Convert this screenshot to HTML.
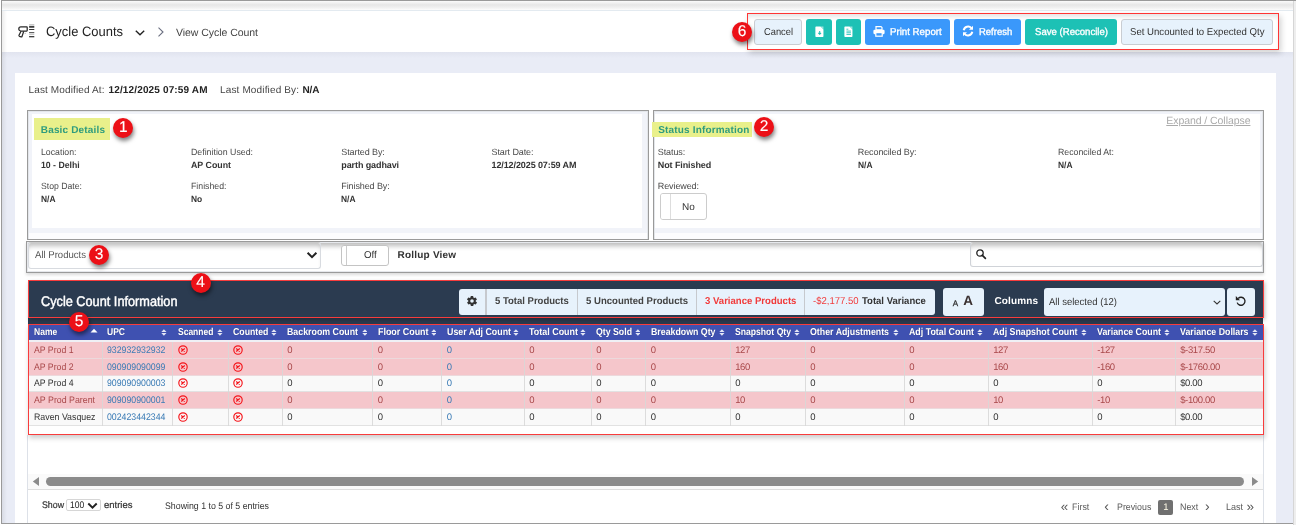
<!DOCTYPE html>
<html lang="en"><head><meta charset="utf-8"><title>View Cycle Count</title>
<style>
html,body{margin:0;padding:0}
body{width:1296px;height:525px;overflow:hidden;position:relative;background:#fff;font-family:"Liberation Sans",sans-serif;font-size:10px;color:#333}
.a{position:absolute;box-sizing:border-box}
.t{position:absolute;white-space:nowrap}
.c{position:absolute;width:20px;height:20px;border-radius:50%;background:#ec1017;color:#fff;-webkit-text-stroke:0.120px #fff;font-size:15.500px;line-height:20px;text-align:center;box-shadow:1px 3px 4px rgba(0,0,0,.5)}
.btn{position:absolute;box-sizing:border-box;top:19px;height:26px;border-radius:3px}
.lt{background:#e7f2fc;border:1px solid #c9cdd2}
.teal{background:#1dc1b5}
.blue{background:#3a98fb}
.box{position:absolute;box-sizing:border-box;border:1px solid #9a9a9a;background:#f1f3f9;box-shadow:inset 0 0 0 1px #e3e6ea}
.box i{position:absolute;background:#fff;display:block}
.row{position:absolute;left:29px;width:1234px;height:17px}
.cell{position:absolute;top:0;height:100%;box-sizing:border-box;border-left:1px solid #dcdcdc}
</style></head><body>
<div class="a" style="left:0;top:0;width:1296px;height:525px;overflow:hidden;will-change:transform;text-rendering:geometricPrecision">
<div class="a" style="left:2px;top:1px;width:1291px;height:9px;background:linear-gradient(#fbfbfb,#e7e7e7 42%,#efefef 70%,#fcfcfc)"></div>
<div class="a" style="left:2px;top:10px;width:1291px;height:1px;background:#e3eaf0"></div>
<div class="a" style="left:2px;top:52px;width:1291px;height:471px;background:#e9ecf6"></div>
<div class="a" style="left:2px;top:11px;width:5px;height:512px;background:linear-gradient(90deg,rgba(0,0,0,.07),rgba(0,0,0,0))"></div>
<div class="a" style="left:1px;top:0;width:1295px;height:1px;background:#9a9a9a"></div>
<div class="a" style="left:1px;top:0;width:1px;height:524px;background:#9a9a9a"></div>
<div class="a" style="left:1px;top:523px;width:1293px;height:1px;background:#9a9a9a"></div>
<div class="a" style="left:1293px;top:1px;width:3px;height:524px;background:#eee;border-left:1px solid #d6d6d6"></div>
<div class="a" style="left:2px;top:52px;width:1291px;height:6px;background:linear-gradient(rgba(40,40,80,.045),rgba(40,40,80,0))"></div>
<div class="a" style="left:15px;top:73px;width:1261px;height:450px;background:#fff"></div>
<div class="a" style="left:27px;top:435px;width:1px;height:88px;background:#dde1e8"></div>
<div class="a" style="left:1263px;top:435px;width:1px;height:88px;background:#dde1e8"></div>
<svg class="a" style="left:17px;top:23px" width="20" height="16" viewBox="0 0 20 16">
<path d="M3.900 3.800H9.700Q10.200 3.800 10.200 4.300V7.500Q10.200 8 9.700 8H3.900A2.100 2.100 0 0 1 3.900 3.800z" fill="none" stroke="#2a2a2a" stroke-width="1.250"/>
<path d="M4 8.200L2 12.300Q1.700 13 2.400 13.300L4.100 13.900Q4.800 14.100 5 13.500L6.700 8.400" fill="none" stroke="#2a2a2a" stroke-width="1.250" stroke-linejoin="round"/>
<rect x="7.700" y="9.900" width="1" height="0.800" fill="#999"/>
<rect x="12.100" y="1.400" width="5.200" height="1" fill="#a8a8a8"/>
<rect x="12.100" y="3.100" width="5.200" height="1.600" fill="#2a2a2a"/>
<rect x="12.100" y="6" width="5.200" height="0.950" fill="#2a2a2a"/>
<rect x="12.100" y="9.100" width="5.200" height="0.850" fill="#444"/>
<rect x="12.100" y="10.600" width="5.200" height="1" fill="#a8a8a8"/>
<rect x="12.100" y="13.100" width="5.200" height="1.200" fill="#2a2a2a"/>
</svg>
<span class="t" style="left:46px;top:22.00px;font-size:13.5px;line-height:19px;color:#222;transform:scaleX(0.9589);transform-origin:0 50%;">Cycle Counts</span>
<svg class="a" style="left:133.500px;top:28.600px" width="12" height="8" viewBox="0 0 12 8"><path d="M1.800 1.800L6 5.700l4.200-3.900" fill="none" stroke="#222" stroke-width="1.400"/></svg>
<svg class="a" style="left:157px;top:26px" width="8" height="12" viewBox="0 0 8 12"><path d="M1.500 1.700L6 6l-4.500 4.300" fill="none" stroke="#6b6f80" stroke-width="1.100"/></svg>
<span class="t" style="left:176px;top:26.00px;font-size:10.5px;line-height:15px;color:#444;letter-spacing:-0.046px;">View Cycle Count</span>
<div class="a" style="left:746.800px;top:13.100px;width:532.400px;height:37.100px;border:1px solid #ff3535;box-shadow:2px 3px 6px rgba(0,0,0,.18),inset 0 4px 4px -1px rgba(0,0,0,.1)"></div>
<div class="btn lt" style="left:754px;width:48px"></div>
<span class="t" style="left:764px;top:26.00px;font-size:10px;line-height:14px;color:#333;transform:scaleX(0.9313);transform-origin:0 50%;">Cancel</span>
<div class="btn teal" style="left:806px;width:26px"></div>
<div class="btn teal" style="left:836px;width:25px"></div>
<svg class="a" style="left:814.500px;top:25.800px" width="9.400" height="11.300" viewBox="0 0 10 12"><path d="M1.2 0.6h4.6L9 3.6v7.2a.8.8 0 0 1-.8.8H1.2a.8.8 0 0 1-.8-.8V1.4a.8.8 0 0 1 .8-.8z" fill="#fff"/><path d="M5.800 0.600H9v3z" fill="#fff" opacity=".55"/><path d="M5 5.400v3.400M3.500 7.400L5 8.900l1.500-1.500" stroke="#1dc1b5" stroke-width="1.100" fill="none"/></svg>
<svg class="a" style="left:843.700px;top:25.800px" width="9.400" height="11.300" viewBox="0 0 10 12"><path d="M1.2 0.6h4.6L9 3.6v7.2a.8.8 0 0 1-.8.8H1.2a.8.8 0 0 1-.8-.8V1.4a.8.8 0 0 1 .8-.8z" fill="#fff"/><path d="M5.800 0.600H9v3z" fill="#fff" opacity=".55"/><path d="M2.600 5.400h4.800M2.600 7.200h4.800M2.600 9h4.800M2.600 3.400h2" stroke="#1dc1b5" stroke-width="0.900" fill="none"/></svg>
<div class="btn blue" style="left:865px;width:85px"></div>
<svg class="a" style="left:873px;top:26px" width="12" height="11" viewBox="0 0 12 11"><path d="M3 0.6h5l1 1v2.2H3z" fill="none" stroke="#fff" stroke-width="1.2"/><rect x="0.4" y="3.8" width="11.2" height="4.4" rx="1.1" fill="#fff"/><rect x="2.8" y="6.6" width="6.4" height="3.6" fill="#3a98fb" stroke="#fff" stroke-width="1.2"/></svg>
<span class="t" style="left:890px;top:26.00px;font-size:10px;line-height:14px;color:#fff;transform:scaleX(0.9689);transform-origin:0 50%;-webkit-text-stroke:0.35px #fff;">Print Report</span>
<div class="btn blue" style="left:954px;width:67px"></div>
<svg class="a" style="left:962.300px;top:25.400px" width="12" height="12" viewBox="0 0 12 12"><path d="M1.700 5.200A4.400 4.400 0 0 1 9.400 3.200" fill="none" stroke="#fff" stroke-width="2"/><path d="M10.300 6.800A4.400 4.400 0 0 1 2.600 8.800" fill="none" stroke="#fff" stroke-width="2"/><path d="M11 0.8v4H7z" fill="#fff"/><path d="M1 11.2v-4h4z" fill="#fff"/></svg>
<span class="t" style="left:979px;top:26.00px;font-size:10px;line-height:14px;color:#fff;transform:scaleX(0.9481);transform-origin:0 50%;-webkit-text-stroke:0.35px #fff;">Refresh</span>
<div class="btn teal" style="left:1025px;width:92px"></div>
<span class="t" style="left:1034.5px;top:26.00px;font-size:10px;line-height:14px;color:#fff;transform:scaleX(0.9586);transform-origin:0 50%;-webkit-text-stroke:0.35px #fff;">Save (Reconcile)</span>
<div class="btn lt" style="left:1121px;width:152px"></div>
<span class="t" style="left:1129.5px;top:26.00px;font-size:10px;line-height:14px;color:#333;transform:scaleX(0.9601);transform-origin:0 50%;">Set Uncounted to Expected Qty</span>
<div class="c" style="left:732px;top:22px">6</div>
<span class="t" style="left:28.5px;top:84.00px;font-size:10px;line-height:14px;color:#444;letter-spacing:0.129px;">Last Modified At:</span>
<span class="t" style="left:108.5px;top:84.00px;font-size:10px;line-height:14px;color:#222;font-weight:700;letter-spacing:0.146px;">12/12/2025 07:59 AM</span>
<span class="t" style="left:220px;top:84.00px;font-size:10px;line-height:14px;color:#444;letter-spacing:0.143px;">Last Modified By:</span>
<span class="t" style="left:302.5px;top:84.00px;font-size:10px;line-height:14px;color:#222;font-weight:700;letter-spacing:-0.117px;">N/A</span>
<div class="box" style="left:27px;top:110px;width:622px;height:130px"><i style="left:4px;top:3px;width:610px;height:114px"></i><i style="left:1px;top:122px;width:618px;height:6px;background:#fcfcfe"></i></div>
<div class="a" style="left:34px;top:118px;width:76px;height:22px;background:#e9f08b"></div>
<span class="t" style="left:40.8px;top:124.00px;font-size:10px;line-height:14px;color:#2f9c7e;font-weight:700;letter-spacing:0.161px;">Basic Details</span>
<div class="c" style="left:113.2px;top:118.1px">1</div>
<span class="t" style="left:40.8px;top:146.00px;font-size:9px;line-height:13px;color:#4a4a4a;transform:scaleX(0.9718);transform-origin:0 50%;">Location:</span>
<span class="t" style="left:40.8px;top:159.00px;font-size:9px;line-height:13px;color:#333;font-weight:700;transform:scaleX(0.9671);transform-origin:0 50%;">10 - Delhi</span>
<span class="t" style="left:40.8px;top:180.00px;font-size:9px;line-height:13px;color:#4a4a4a;transform:scaleX(0.9640);transform-origin:0 50%;">Stop Date:</span>
<span class="t" style="left:40.8px;top:193.00px;font-size:9px;line-height:13px;color:#333;font-weight:700;transform:scaleX(0.9355);transform-origin:0 50%;">N/A</span>
<span class="t" style="left:190.8px;top:146.00px;font-size:9px;line-height:13px;color:#4a4a4a;transform:scaleX(0.9757);transform-origin:0 50%;">Definition Used:</span>
<span class="t" style="left:190.8px;top:159.00px;font-size:9px;line-height:13px;color:#333;font-weight:700;transform:scaleX(0.9793);transform-origin:0 50%;">AP Count</span>
<span class="t" style="left:190.8px;top:180.00px;font-size:9px;line-height:13px;color:#4a4a4a;transform:scaleX(0.9718);transform-origin:0 50%;">Finished:</span>
<span class="t" style="left:190.8px;top:193.00px;font-size:9px;line-height:13px;color:#333;font-weight:700;transform:scaleX(0.9333);transform-origin:0 50%;">No</span>
<span class="t" style="left:341.3px;top:146.00px;font-size:9px;line-height:13px;color:#4a4a4a;letter-spacing:-0.1px;">Started By:</span>
<span class="t" style="left:341.3px;top:159.00px;font-size:9px;line-height:13px;color:#333;font-weight:700;letter-spacing:-0.1px;">parth gadhavi</span>
<span class="t" style="left:341.3px;top:180.00px;font-size:9px;line-height:13px;color:#4a4a4a;letter-spacing:-0.1px;">Finished By:</span>
<span class="t" style="left:341.3px;top:193.00px;font-size:9px;line-height:13px;color:#333;font-weight:700;transform:scaleX(0.9355);transform-origin:0 50%;">N/A</span>
<span class="t" style="left:491.5px;top:146.00px;font-size:9px;line-height:13px;color:#4a4a4a;letter-spacing:-0.1px;">Start Date:</span>
<span class="t" style="left:491.5px;top:159.00px;font-size:9px;line-height:13px;color:#333;font-weight:700;letter-spacing:-0.1px;">12/12/2025 07:59 AM</span>
<div class="box" style="left:653px;top:110px;width:611px;height:130px"><i style="left:1px;top:3px;width:605px;height:114px"></i><i style="left:1px;top:122px;width:607px;height:6px;background:#fcfcfe"></i></div>
<div class="a" style="left:652px;top:122px;width:100px;height:15px;background:#e9f08b"></div>
<span class="t" style="left:658.3px;top:124.00px;font-size:10px;line-height:14px;color:#2f9c7e;font-weight:700;letter-spacing:0.156px;">Status Information</span>
<div class="c" style="left:754px;top:117.400px">2</div>
<span class="t" style="left:1166.3px;top:114.00px;font-size:10.5px;line-height:15px;color:#aaa;letter-spacing:-0.065px;text-decoration:underline;">Expand / Collapse</span>
<span class="t" style="left:657.8px;top:146.00px;font-size:9px;line-height:13px;color:#4a4a4a;letter-spacing:-0.1px;">Status:</span>
<span class="t" style="left:657.8px;top:159.00px;font-size:9px;line-height:13px;color:#333;font-weight:700;letter-spacing:-0.1px;">Not Finished</span>
<span class="t" style="left:857.8px;top:146.00px;font-size:9px;line-height:13px;color:#4a4a4a;letter-spacing:-0.1px;">Reconciled By:</span>
<span class="t" style="left:857.8px;top:159.00px;font-size:9px;line-height:13px;color:#333;font-weight:700;transform:scaleX(0.9355);transform-origin:0 50%;">N/A</span>
<span class="t" style="left:1058.3px;top:146.00px;font-size:9px;line-height:13px;color:#4a4a4a;transform:scaleX(0.9731);transform-origin:0 50%;">Reconciled At:</span>
<span class="t" style="left:1058.3px;top:159.00px;font-size:9px;line-height:13px;color:#333;font-weight:700;transform:scaleX(0.9355);transform-origin:0 50%;">N/A</span>
<span class="t" style="left:657.8px;top:180.00px;font-size:9px;line-height:13px;color:#4a4a4a;letter-spacing:-0.1px;">Reviewed:</span>
<div class="a" style="left:660px;top:193px;width:47px;height:27px;border:1px solid #ccc;border-radius:3px;background:#fff"><div class="a" style="left:0;top:0;width:10px;height:25px;border-right:1px solid #ddd;border-radius:2px 0 0 2px;background:#fff"></div></div>
<span class="t" style="left:682px;top:201.00px;font-size:10px;line-height:14px;color:#333;">No</span>
<div class="a" style="left:26px;top:241px;width:1238px;height:32px;border:1px solid #9a9a9a;background:#fff;box-shadow:inset 0 0 0 1px #e6e8ec, inset 0 7px 5px -3px rgba(0,0,0,.27), 0 2px 3px rgba(0,0,0,.14)"></div>
<div class="a" style="left:28px;top:242px;width:293px;height:27px;border:1px solid #d8dbe0;border-top-color:#c9c9c9;border-radius:3px;background:#fff;box-shadow:inset 0 6px 5px -3px rgba(0,0,0,.25)"></div>
<span class="t" style="left:34.8px;top:249.00px;font-size:10px;line-height:14px;color:#555;transform:scaleX(0.9558);transform-origin:0 50%;">All Products</span>
<svg class="a" style="left:306px;top:251px" width="12" height="9" viewBox="0 0 12 9"><path d="M1.6 1.8L6 6.2l4.4-4.4" fill="none" stroke="#222" stroke-width="2"/></svg>
<div class="c" style="left:89px;top:245.400px">3</div>
<div class="a" style="left:341px;top:245px;width:48px;height:21px;border:1px solid #c4c4c4;border-radius:3px;background:#fff"><div class="a" style="left:0;top:0;width:5px;height:19px;border-right:1px solid #ccc;border-radius:2px 0 0 2px"></div></div>
<span class="t" style="left:363.7px;top:249.00px;font-size:10px;line-height:14px;color:#333;transform:scaleX(0.9729);transform-origin:0 50%;">Off</span>
<span class="t" style="left:397.6px;top:249.00px;font-size:10px;line-height:14px;color:#333;font-weight:700;letter-spacing:0.200px;">Rollup View</span>
<div class="a" style="left:970px;top:242px;width:293px;height:25px;border:1px solid #d0d3d8;border-top-color:#c6c6c6;border-radius:3px;background:#fff;box-shadow:inset 0 6px 5px -3px rgba(0,0,0,.25)"></div>
<svg class="a" style="left:975px;top:248px" width="12" height="12" viewBox="0 0 12 12"><circle cx="5" cy="5" r="3.2" fill="none" stroke="#222" stroke-width="1.3"/><path d="M7.400 7.400l3 3" stroke="#222" stroke-width="1.700" stroke-linecap="round"/></svg>
<div class="a" style="left:28px;top:280px;width:1235px;height:45px;background:#2b3b50"></div>
<div class="a" style="left:28px;top:280px;width:1236px;height:37.700px;border:1px solid #f83c3c;box-shadow:1px 2px 4px rgba(0,0,0,.25)"></div>
<span class="t" style="left:41px;top:291.00px;font-size:14px;line-height:20px;color:#fff;transform:scaleX(0.9089);transform-origin:0 50%;-webkit-text-stroke:0.450px #fff;">Cycle Count Information</span>
<div class="c" style="left:190.5px;top:273px">4</div>
<div class="a" style="left:459px;top:289px;width:476px;height:26px;border-radius:3px;background:#e7f2fc"></div>
<div class="a" style="left:485.15px;top:289px;width:1.5px;height:26px;background:#c6c9ce"></div>
<div class="a" style="left:576.55px;top:289px;width:1.5px;height:26px;background:#c6c9ce"></div>
<div class="a" style="left:695.75px;top:289px;width:1.5px;height:26px;background:#c6c9ce"></div>
<div class="a" style="left:803.85px;top:289px;width:1.5px;height:26px;background:#c6c9ce"></div>
<svg class="a" style="left:466.200px;top:295.100px" width="12" height="12" viewBox="0 0 24 24"><path fill="#333" d="M19.4 13a7.6 7.6 0 0 0 0-2l2.1-1.7a.5.5 0 0 0 .1-.6l-2-3.4a.5.5 0 0 0-.6-.2l-2.5 1a7.400 7.400 0 0 0-1.700-1l-.4-2.600a.5.5 0 0 0-.5-.4h-4a.5.5 0 0 0-.5.4l-.4 2.600a7.400 7.400 0 0 0-1.700 1l-2.500-1a.5.5 0 0 0-.6.200l-2 3.400a.5.5 0 0 0 .1.600L4.600 11a7.600 7.600 0 0 0 0 2l-2.100 1.700a.5.5 0 0 0-.1.600l2 3.400a.5.5 0 0 0 .6.200l2.500-1a7.400 7.400 0 0 0 1.700 1l.4 2.600a.5.5 0 0 0 .5.400h4a.5.5 0 0 0 .5-.4l.4-2.600a7.400 7.400 0 0 0 1.700-1l2.500 1a.5.5 0 0 0 .6-.2l2-3.400a.5.5 0 0 0-.1-.6zM12 15.600a3.600 3.600 0 1 1 0-7.200 3.600 3.600 0 0 1 0 7.200z"/></svg>
<span class="t" style="left:494.7px;top:295.00px;font-size:10px;line-height:14px;color:#444;font-weight:700;transform:scaleX(0.9509);transform-origin:0 50%;">5 Total Products</span>
<span class="t" style="left:585.6px;top:295.00px;font-size:10px;line-height:14px;color:#444;font-weight:700;transform:scaleX(0.9561);transform-origin:0 50%;">5 Uncounted Products</span>
<span class="t" style="left:704.6px;top:295.00px;font-size:10px;line-height:14px;color:#f13a3a;font-weight:700;transform:scaleX(0.9560);transform-origin:0 50%;">3 Variance Products</span>
<span class="t" style="left:812.7px;top:295.00px;font-size:10px;line-height:14px;color:#f13a3a;transform:scaleX(0.9534);transform-origin:0 50%;">-$2,177.50</span>
<span class="t" style="left:861.8px;top:295.00px;font-size:10px;line-height:14px;color:#333;font-weight:700;transform:scaleX(0.9511);transform-origin:0 50%;">Total Variance</span>
<div class="a" style="left:943.3px;top:288.300px;width:40.700px;height:27.400px;border-radius:3px;background:#e7f2fc"></div>
<span class="t" style="left:952.8px;top:298.00px;font-size:8px;line-height:11px;color:#333;-webkit-text-stroke:0.3px currentColor;">A</span>
<span class="t" style="left:963.3px;top:291.00px;font-size:13.5px;line-height:19px;color:#3a3030;font-weight:700;">A</span>
<span class="t" style="left:994.5px;top:295.00px;font-size:10px;line-height:14px;color:#fff;font-weight:700;letter-spacing:0.120px;">Columns</span>
<div class="a" style="left:1043.5px;top:288px;width:181.5px;height:28px;border-radius:3px;background:#e7f2fc"></div>
<span class="t" style="left:1049px;top:296.00px;font-size:10px;line-height:14px;color:#333;transform:scaleX(0.9484);transform-origin:0 50%;">All selected (12)</span>
<svg class="a" style="left:1212px;top:298.500px" width="10" height="7" viewBox="0 0 10 7"><path d="M1.700 1.900L5 4.900l3.300-3" fill="none" stroke="#333" stroke-width="1.100"/></svg>
<div class="a" style="left:1227px;top:288px;width:28px;height:28px;border-radius:3px;background:#e7f2fc"></div>
<svg class="a" style="left:1235px;top:295px" width="12" height="12" viewBox="0 0 12 12"><path d="M3.2 3.400A4 4 0 1 1 2.200 7.600" fill="none" stroke="#222" stroke-width="1.350"/><path d="M0.800 1v4.200h4.200z" fill="#222"/></svg>
<div class="a" style="left:28px;top:325px;width:1236px;height:15px;background:#3f51b1"></div>
<div class="a" style="left:28px;top:340px;width:1236px;height:2px;background:#eff0f5"></div>
<span class="t" style="left:34.2px;top:326.00px;font-size:10px;line-height:14px;color:#fff;font-weight:700;transform:scaleX(0.8514);transform-origin:0 50%;text-shadow:0 0 1px rgba(0,0,0,.35);">Name</span>
<svg class="a" style="left:90px;top:327.700px" width="8" height="5" viewBox="0 0 8 5"><path d="M0.500 4.500L4 0.800l3.500 3.700z" fill="#fff"/></svg>
<span class="t" style="left:107.2px;top:326.00px;font-size:10px;line-height:14px;color:#fff;font-weight:700;transform:scaleX(0.8521);transform-origin:0 50%;text-shadow:0 0 1px rgba(0,0,0,.35);">UPC</span>
<svg class="a" style="left:161.2px;top:328.700px" width="5.800" height="7" viewBox="0 0 6 7.200"><path d="M0.300 3L3 0.300l2.700 2.700z" fill="#e3e6f5"/><path d="M0.300 4.200L3 6.900l2.700-2.700z" fill="#e3e6f5"/></svg>
<span class="t" style="left:178.3px;top:326.00px;font-size:10px;line-height:14px;color:#fff;font-weight:700;transform:scaleX(0.8492);transform-origin:0 50%;text-shadow:0 0 1px rgba(0,0,0,.35);">Scanned</span>
<svg class="a" style="left:217.2px;top:328.700px" width="5.800" height="7" viewBox="0 0 6 7.200"><path d="M0.300 3L3 0.300l2.700 2.700z" fill="#e3e6f5"/><path d="M0.300 4.200L3 6.900l2.700-2.700z" fill="#e3e6f5"/></svg>
<span class="t" style="left:233.2px;top:326.00px;font-size:10px;line-height:14px;color:#fff;font-weight:700;transform:scaleX(0.8731);transform-origin:0 50%;text-shadow:0 0 1px rgba(0,0,0,.35);">Counted</span>
<svg class="a" style="left:271.2px;top:328.700px" width="5.800" height="7" viewBox="0 0 6 7.200"><path d="M0.300 3L3 0.300l2.700 2.700z" fill="#e3e6f5"/><path d="M0.300 4.200L3 6.900l2.700-2.700z" fill="#e3e6f5"/></svg>
<span class="t" style="left:287.2px;top:326.00px;font-size:10px;line-height:14px;color:#fff;font-weight:700;transform:scaleX(0.8813);transform-origin:0 50%;text-shadow:0 0 1px rgba(0,0,0,.35);">Backroom Count</span>
<svg class="a" style="left:361.7px;top:328.700px" width="5.800" height="7" viewBox="0 0 6 7.200"><path d="M0.300 3L3 0.300l2.700 2.700z" fill="#e3e6f5"/><path d="M0.300 4.200L3 6.900l2.700-2.700z" fill="#e3e6f5"/></svg>
<span class="t" style="left:377.7px;top:326.00px;font-size:10px;line-height:14px;color:#fff;font-weight:700;transform:scaleX(0.8913);transform-origin:0 50%;text-shadow:0 0 1px rgba(0,0,0,.35);">Floor Count</span>
<svg class="a" style="left:430.7px;top:328.700px" width="5.800" height="7" viewBox="0 0 6 7.200"><path d="M0.300 3L3 0.300l2.700 2.700z" fill="#e3e6f5"/><path d="M0.300 4.200L3 6.900l2.700-2.700z" fill="#e3e6f5"/></svg>
<span class="t" style="left:446.7px;top:326.00px;font-size:10px;line-height:14px;color:#fff;font-weight:700;transform:scaleX(0.8837);transform-origin:0 50%;text-shadow:0 0 1px rgba(0,0,0,.35);">User Adj Count</span>
<svg class="a" style="left:513.2px;top:328.700px" width="5.800" height="7" viewBox="0 0 6 7.200"><path d="M0.300 3L3 0.300l2.700 2.700z" fill="#e3e6f5"/><path d="M0.300 4.200L3 6.900l2.700-2.700z" fill="#e3e6f5"/></svg>
<span class="t" style="left:529.2px;top:326.00px;font-size:10px;line-height:14px;color:#fff;font-weight:700;transform:scaleX(0.8940);transform-origin:0 50%;text-shadow:0 0 1px rgba(0,0,0,.35);">Total Count</span>
<svg class="a" style="left:580.2px;top:328.700px" width="5.800" height="7" viewBox="0 0 6 7.200"><path d="M0.300 3L3 0.300l2.700 2.700z" fill="#e3e6f5"/><path d="M0.300 4.200L3 6.900l2.700-2.700z" fill="#e3e6f5"/></svg>
<span class="t" style="left:596.2px;top:326.00px;font-size:10px;line-height:14px;color:#fff;font-weight:700;transform:scaleX(0.8754);transform-origin:0 50%;text-shadow:0 0 1px rgba(0,0,0,.35);">Qty Sold</span>
<svg class="a" style="left:634.7px;top:328.700px" width="5.800" height="7" viewBox="0 0 6 7.200"><path d="M0.300 3L3 0.300l2.700 2.700z" fill="#e3e6f5"/><path d="M0.300 4.200L3 6.900l2.700-2.700z" fill="#e3e6f5"/></svg>
<span class="t" style="left:650.7px;top:326.00px;font-size:10px;line-height:14px;color:#fff;font-weight:700;transform:scaleX(0.8792);transform-origin:0 50%;text-shadow:0 0 1px rgba(0,0,0,.35);">Breakdown Qty</span>
<svg class="a" style="left:719.2px;top:328.700px" width="5.800" height="7" viewBox="0 0 6 7.200"><path d="M0.300 3L3 0.300l2.700 2.700z" fill="#e3e6f5"/><path d="M0.300 4.200L3 6.900l2.700-2.700z" fill="#e3e6f5"/></svg>
<span class="t" style="left:735.2px;top:326.00px;font-size:10px;line-height:14px;color:#fff;font-weight:700;transform:scaleX(0.8613);transform-origin:0 50%;text-shadow:0 0 1px rgba(0,0,0,.35);">Snapshot Qty</span>
<svg class="a" style="left:794.2px;top:328.700px" width="5.800" height="7" viewBox="0 0 6 7.200"><path d="M0.300 3L3 0.300l2.700 2.700z" fill="#e3e6f5"/><path d="M0.300 4.200L3 6.900l2.700-2.700z" fill="#e3e6f5"/></svg>
<span class="t" style="left:810.2px;top:326.00px;font-size:10px;line-height:14px;color:#fff;font-weight:700;transform:scaleX(0.8813);transform-origin:0 50%;text-shadow:0 0 1px rgba(0,0,0,.35);">Other Adjustments</span>
<svg class="a" style="left:893.2px;top:328.700px" width="5.800" height="7" viewBox="0 0 6 7.200"><path d="M0.300 3L3 0.300l2.700 2.700z" fill="#e3e6f5"/><path d="M0.300 4.200L3 6.900l2.700-2.700z" fill="#e3e6f5"/></svg>
<span class="t" style="left:909.2px;top:326.00px;font-size:10px;line-height:14px;color:#fff;font-weight:700;transform:scaleX(0.8821);transform-origin:0 50%;text-shadow:0 0 1px rgba(0,0,0,.35);">Adj Total Count</span>
<svg class="a" style="left:977.2px;top:328.700px" width="5.800" height="7" viewBox="0 0 6 7.200"><path d="M0.300 3L3 0.300l2.700 2.700z" fill="#e3e6f5"/><path d="M0.300 4.200L3 6.900l2.700-2.700z" fill="#e3e6f5"/></svg>
<span class="t" style="left:993.2px;top:326.00px;font-size:10px;line-height:14px;color:#fff;font-weight:700;transform:scaleX(0.8792);transform-origin:0 50%;text-shadow:0 0 1px rgba(0,0,0,.35);">Adj Snapshot Count</span>
<svg class="a" style="left:1081.2px;top:328.700px" width="5.800" height="7" viewBox="0 0 6 7.200"><path d="M0.300 3L3 0.300l2.700 2.700z" fill="#e3e6f5"/><path d="M0.300 4.200L3 6.900l2.700-2.700z" fill="#e3e6f5"/></svg>
<span class="t" style="left:1097.2px;top:326.00px;font-size:10px;line-height:14px;color:#fff;font-weight:700;transform:scaleX(0.8790);transform-origin:0 50%;text-shadow:0 0 1px rgba(0,0,0,.35);">Variance Count</span>
<svg class="a" style="left:1164.2px;top:328.700px" width="5.800" height="7" viewBox="0 0 6 7.200"><path d="M0.300 3L3 0.300l2.700 2.700z" fill="#e3e6f5"/><path d="M0.300 4.200L3 6.900l2.700-2.700z" fill="#e3e6f5"/></svg>
<span class="t" style="left:1180.2px;top:326.00px;font-size:10px;line-height:14px;color:#fff;font-weight:700;transform:scaleX(0.8801);transform-origin:0 50%;text-shadow:0 0 1px rgba(0,0,0,.35);">Variance Dollars</span>
<svg class="a" style="left:1252.2px;top:328.700px" width="5.800" height="7" viewBox="0 0 6 7.200"><path d="M0.300 3L3 0.300l2.700 2.700z" fill="#e3e6f5"/><path d="M0.300 4.200L3 6.900l2.700-2.700z" fill="#e3e6f5"/></svg>
<div class="a" style="left:29px;top:341.6px;width:1234px;height:16.8px;background:#f5c6cb"></div>
<span class="t" style="left:34px;top:344.00px;font-size:9.5px;line-height:13px;color:#a9484a;transform:scaleX(0.9156);transform-origin:0 50%;">AP Prod 1</span>
<span class="t" style="left:107.4px;top:344.00px;font-size:9.5px;line-height:13px;color:#3a7bb5;transform:scaleX(0.9226);transform-origin:0 50%;">932932932932</span>
<svg class="a" style="left:177.79999999999998px;top:344.7px" width="10" height="10" viewBox="0 0 10 10"><circle cx="5" cy="5" r="4.200" fill="none" stroke="#f5141a" stroke-width="1.150"/><path d="M3.200 3.500l3.600 3M6.800 3.500l-3.600 3" stroke="#f5141a" stroke-width="1.200"/></svg>
<svg class="a" style="left:232.89999999999998px;top:344.7px" width="10" height="10" viewBox="0 0 10 10"><circle cx="5" cy="5" r="4.200" fill="none" stroke="#f5141a" stroke-width="1.150"/><path d="M3.200 3.500l3.600 3M6.800 3.500l-3.600 3" stroke="#f5141a" stroke-width="1.200"/></svg>
<span class="t" style="left:287.2px;top:344.00px;font-size:9.5px;line-height:13px;color:#a9484a;letter-spacing:-0.350px;">0</span>
<span class="t" style="left:377.7px;top:344.00px;font-size:9.5px;line-height:13px;color:#a9484a;letter-spacing:-0.350px;">0</span>
<span class="t" style="left:446.7px;top:344.00px;font-size:9.5px;line-height:13px;color:#3a7bb5;letter-spacing:-0.350px;">0</span>
<span class="t" style="left:529.2px;top:344.00px;font-size:9.5px;line-height:13px;color:#a9484a;letter-spacing:-0.350px;">0</span>
<span class="t" style="left:596.2px;top:344.00px;font-size:9.5px;line-height:13px;color:#a9484a;letter-spacing:-0.350px;">0</span>
<span class="t" style="left:650.7px;top:344.00px;font-size:9.5px;line-height:13px;color:#a9484a;letter-spacing:-0.350px;">0</span>
<span class="t" style="left:735.2px;top:344.00px;font-size:9.5px;line-height:13px;color:#a9484a;letter-spacing:-0.350px;">127</span>
<span class="t" style="left:810.2px;top:344.00px;font-size:9.5px;line-height:13px;color:#a9484a;letter-spacing:-0.350px;">0</span>
<span class="t" style="left:909.2px;top:344.00px;font-size:9.5px;line-height:13px;color:#a9484a;letter-spacing:-0.350px;">0</span>
<span class="t" style="left:993.2px;top:344.00px;font-size:9.5px;line-height:13px;color:#a9484a;letter-spacing:-0.350px;">127</span>
<span class="t" style="left:1097.2px;top:344.00px;font-size:9.5px;line-height:13px;color:#a9484a;letter-spacing:-0.350px;">-127</span>
<span class="t" style="left:1180.2px;top:344.00px;font-size:9.5px;line-height:13px;color:#a9484a;letter-spacing:-0.350px;">$-317.50</span>
<div class="a" style="left:29px;top:358.4px;width:1234px;height:16.7px;background:#f5c6cb"></div>
<span class="t" style="left:34px;top:361.00px;font-size:9.5px;line-height:13px;color:#a9484a;transform:scaleX(0.9156);transform-origin:0 50%;">AP Prod 2</span>
<span class="t" style="left:107.4px;top:361.00px;font-size:9.5px;line-height:13px;color:#3a7bb5;transform:scaleX(0.9226);transform-origin:0 50%;">090909090099</span>
<svg class="a" style="left:177.79999999999998px;top:361.7px" width="10" height="10" viewBox="0 0 10 10"><circle cx="5" cy="5" r="4.200" fill="none" stroke="#f5141a" stroke-width="1.150"/><path d="M3.200 3.500l3.600 3M6.800 3.500l-3.600 3" stroke="#f5141a" stroke-width="1.200"/></svg>
<svg class="a" style="left:232.89999999999998px;top:361.7px" width="10" height="10" viewBox="0 0 10 10"><circle cx="5" cy="5" r="4.200" fill="none" stroke="#f5141a" stroke-width="1.150"/><path d="M3.200 3.500l3.600 3M6.800 3.500l-3.600 3" stroke="#f5141a" stroke-width="1.200"/></svg>
<span class="t" style="left:287.2px;top:361.00px;font-size:9.5px;line-height:13px;color:#a9484a;letter-spacing:-0.350px;">0</span>
<span class="t" style="left:377.7px;top:361.00px;font-size:9.5px;line-height:13px;color:#a9484a;letter-spacing:-0.350px;">0</span>
<span class="t" style="left:446.7px;top:361.00px;font-size:9.5px;line-height:13px;color:#3a7bb5;letter-spacing:-0.350px;">0</span>
<span class="t" style="left:529.2px;top:361.00px;font-size:9.5px;line-height:13px;color:#a9484a;letter-spacing:-0.350px;">0</span>
<span class="t" style="left:596.2px;top:361.00px;font-size:9.5px;line-height:13px;color:#a9484a;letter-spacing:-0.350px;">0</span>
<span class="t" style="left:650.7px;top:361.00px;font-size:9.5px;line-height:13px;color:#a9484a;letter-spacing:-0.350px;">0</span>
<span class="t" style="left:735.2px;top:361.00px;font-size:9.5px;line-height:13px;color:#a9484a;letter-spacing:-0.350px;">160</span>
<span class="t" style="left:810.2px;top:361.00px;font-size:9.5px;line-height:13px;color:#a9484a;letter-spacing:-0.350px;">0</span>
<span class="t" style="left:909.2px;top:361.00px;font-size:9.5px;line-height:13px;color:#a9484a;letter-spacing:-0.350px;">0</span>
<span class="t" style="left:993.2px;top:361.00px;font-size:9.5px;line-height:13px;color:#a9484a;letter-spacing:-0.350px;">160</span>
<span class="t" style="left:1097.2px;top:361.00px;font-size:9.5px;line-height:13px;color:#a9484a;letter-spacing:-0.350px;">-160</span>
<span class="t" style="left:1180.2px;top:361.00px;font-size:9.5px;line-height:13px;color:#a9484a;letter-spacing:-0.350px;">$-1760.00</span>
<div class="a" style="left:29px;top:375.1px;width:1234px;height:16.8px;background:#f9f9f9"></div>
<span class="t" style="left:34px;top:377.00px;font-size:9.5px;line-height:13px;color:#333;transform:scaleX(0.9156);transform-origin:0 50%;">AP Prod 4</span>
<span class="t" style="left:107.4px;top:377.00px;font-size:9.5px;line-height:13px;color:#3a7bb5;transform:scaleX(0.9226);transform-origin:0 50%;">909090900003</span>
<svg class="a" style="left:177.79999999999998px;top:378.1px" width="10" height="10" viewBox="0 0 10 10"><circle cx="5" cy="5" r="4.200" fill="none" stroke="#f5141a" stroke-width="1.150"/><path d="M3.200 3.500l3.600 3M6.800 3.500l-3.600 3" stroke="#f5141a" stroke-width="1.200"/></svg>
<svg class="a" style="left:232.89999999999998px;top:378.1px" width="10" height="10" viewBox="0 0 10 10"><circle cx="5" cy="5" r="4.200" fill="none" stroke="#f5141a" stroke-width="1.150"/><path d="M3.200 3.500l3.600 3M6.800 3.500l-3.600 3" stroke="#f5141a" stroke-width="1.200"/></svg>
<span class="t" style="left:287.2px;top:377.00px;font-size:9.5px;line-height:13px;color:#333;letter-spacing:-0.350px;">0</span>
<span class="t" style="left:377.7px;top:377.00px;font-size:9.5px;line-height:13px;color:#333;letter-spacing:-0.350px;">0</span>
<span class="t" style="left:446.7px;top:377.00px;font-size:9.5px;line-height:13px;color:#3a7bb5;letter-spacing:-0.350px;">0</span>
<span class="t" style="left:529.2px;top:377.00px;font-size:9.5px;line-height:13px;color:#333;letter-spacing:-0.350px;">0</span>
<span class="t" style="left:596.2px;top:377.00px;font-size:9.5px;line-height:13px;color:#333;letter-spacing:-0.350px;">0</span>
<span class="t" style="left:650.7px;top:377.00px;font-size:9.5px;line-height:13px;color:#333;letter-spacing:-0.350px;">0</span>
<span class="t" style="left:735.2px;top:377.00px;font-size:9.5px;line-height:13px;color:#333;letter-spacing:-0.350px;">0</span>
<span class="t" style="left:810.2px;top:377.00px;font-size:9.5px;line-height:13px;color:#333;letter-spacing:-0.350px;">0</span>
<span class="t" style="left:909.2px;top:377.00px;font-size:9.5px;line-height:13px;color:#333;letter-spacing:-0.350px;">0</span>
<span class="t" style="left:993.2px;top:377.00px;font-size:9.5px;line-height:13px;color:#333;letter-spacing:-0.350px;">0</span>
<span class="t" style="left:1097.2px;top:377.00px;font-size:9.5px;line-height:13px;color:#333;letter-spacing:-0.350px;">0</span>
<span class="t" style="left:1180.2px;top:377.00px;font-size:9.5px;line-height:13px;color:#333;letter-spacing:-0.350px;">$0.00</span>
<div class="a" style="left:29px;top:391.9px;width:1234px;height:16.6px;background:#f5c6cb"></div>
<span class="t" style="left:34px;top:394.00px;font-size:9.5px;line-height:13px;color:#a9484a;transform:scaleX(0.9264);transform-origin:0 50%;">AP Prod Parent</span>
<span class="t" style="left:107.4px;top:394.00px;font-size:9.5px;line-height:13px;color:#3a7bb5;transform:scaleX(0.9226);transform-origin:0 50%;">909090900001</span>
<svg class="a" style="left:177.79999999999998px;top:394.8px" width="10" height="10" viewBox="0 0 10 10"><circle cx="5" cy="5" r="4.200" fill="none" stroke="#f5141a" stroke-width="1.150"/><path d="M3.200 3.500l3.600 3M6.800 3.500l-3.600 3" stroke="#f5141a" stroke-width="1.200"/></svg>
<svg class="a" style="left:232.89999999999998px;top:394.8px" width="10" height="10" viewBox="0 0 10 10"><circle cx="5" cy="5" r="4.200" fill="none" stroke="#f5141a" stroke-width="1.150"/><path d="M3.200 3.500l3.600 3M6.800 3.500l-3.600 3" stroke="#f5141a" stroke-width="1.200"/></svg>
<span class="t" style="left:287.2px;top:394.00px;font-size:9.5px;line-height:13px;color:#a9484a;letter-spacing:-0.350px;">0</span>
<span class="t" style="left:377.7px;top:394.00px;font-size:9.5px;line-height:13px;color:#a9484a;letter-spacing:-0.350px;">0</span>
<span class="t" style="left:446.7px;top:394.00px;font-size:9.5px;line-height:13px;color:#3a7bb5;letter-spacing:-0.350px;">0</span>
<span class="t" style="left:529.2px;top:394.00px;font-size:9.5px;line-height:13px;color:#a9484a;letter-spacing:-0.350px;">0</span>
<span class="t" style="left:596.2px;top:394.00px;font-size:9.5px;line-height:13px;color:#a9484a;letter-spacing:-0.350px;">0</span>
<span class="t" style="left:650.7px;top:394.00px;font-size:9.5px;line-height:13px;color:#a9484a;letter-spacing:-0.350px;">0</span>
<span class="t" style="left:735.2px;top:394.00px;font-size:9.5px;line-height:13px;color:#a9484a;letter-spacing:-0.350px;">10</span>
<span class="t" style="left:810.2px;top:394.00px;font-size:9.5px;line-height:13px;color:#a9484a;letter-spacing:-0.350px;">0</span>
<span class="t" style="left:909.2px;top:394.00px;font-size:9.5px;line-height:13px;color:#a9484a;letter-spacing:-0.350px;">0</span>
<span class="t" style="left:993.2px;top:394.00px;font-size:9.5px;line-height:13px;color:#a9484a;letter-spacing:-0.350px;">10</span>
<span class="t" style="left:1097.2px;top:394.00px;font-size:9.5px;line-height:13px;color:#a9484a;letter-spacing:-0.350px;">-10</span>
<span class="t" style="left:1180.2px;top:394.00px;font-size:9.5px;line-height:13px;color:#a9484a;letter-spacing:-0.350px;">$-100.00</span>
<div class="a" style="left:29px;top:408.5px;width:1234px;height:16.7px;background:#f9f9f9"></div>
<span class="t" style="left:34px;top:411.00px;font-size:9.5px;line-height:13px;color:#333;transform:scaleX(0.9266);transform-origin:0 50%;">Raven Vasquez</span>
<span class="t" style="left:107.4px;top:411.00px;font-size:9.5px;line-height:13px;color:#3a7bb5;transform:scaleX(0.9226);transform-origin:0 50%;">002423442344</span>
<svg class="a" style="left:177.79999999999998px;top:411.7px" width="10" height="10" viewBox="0 0 10 10"><circle cx="5" cy="5" r="4.200" fill="none" stroke="#f5141a" stroke-width="1.150"/><path d="M3.200 3.500l3.600 3M6.800 3.500l-3.600 3" stroke="#f5141a" stroke-width="1.200"/></svg>
<svg class="a" style="left:232.89999999999998px;top:411.7px" width="10" height="10" viewBox="0 0 10 10"><circle cx="5" cy="5" r="4.200" fill="none" stroke="#f5141a" stroke-width="1.150"/><path d="M3.200 3.500l3.600 3M6.800 3.500l-3.600 3" stroke="#f5141a" stroke-width="1.200"/></svg>
<span class="t" style="left:287.2px;top:411.00px;font-size:9.5px;line-height:13px;color:#333;letter-spacing:-0.350px;">0</span>
<span class="t" style="left:377.7px;top:411.00px;font-size:9.5px;line-height:13px;color:#333;letter-spacing:-0.350px;">0</span>
<span class="t" style="left:446.7px;top:411.00px;font-size:9.5px;line-height:13px;color:#3a7bb5;letter-spacing:-0.350px;">0</span>
<span class="t" style="left:529.2px;top:411.00px;font-size:9.5px;line-height:13px;color:#333;letter-spacing:-0.350px;">0</span>
<span class="t" style="left:596.2px;top:411.00px;font-size:9.5px;line-height:13px;color:#333;letter-spacing:-0.350px;">0</span>
<span class="t" style="left:650.7px;top:411.00px;font-size:9.5px;line-height:13px;color:#333;letter-spacing:-0.350px;">0</span>
<span class="t" style="left:735.2px;top:411.00px;font-size:9.5px;line-height:13px;color:#333;letter-spacing:-0.350px;">0</span>
<span class="t" style="left:810.2px;top:411.00px;font-size:9.5px;line-height:13px;color:#333;letter-spacing:-0.350px;">0</span>
<span class="t" style="left:909.2px;top:411.00px;font-size:9.5px;line-height:13px;color:#333;letter-spacing:-0.350px;">0</span>
<span class="t" style="left:993.2px;top:411.00px;font-size:9.5px;line-height:13px;color:#333;letter-spacing:-0.350px;">0</span>
<span class="t" style="left:1097.2px;top:411.00px;font-size:9.5px;line-height:13px;color:#333;letter-spacing:-0.350px;">0</span>
<span class="t" style="left:1180.2px;top:411.00px;font-size:9.5px;line-height:13px;color:#333;letter-spacing:-0.350px;">$0.00</span>
<div class="a" style="left:29px;top:357.9px;width:1234px;height:1px;background:#ecd9dc"></div>
<div class="a" style="left:29px;top:374.6px;width:1234px;height:1px;background:#ecd9dc"></div>
<div class="a" style="left:29px;top:391.4px;width:1234px;height:1px;background:#e2e2e2"></div>
<div class="a" style="left:29px;top:408.0px;width:1234px;height:1px;background:#ecd9dc"></div>
<div class="a" style="left:29px;top:424.7px;width:1234px;height:1px;background:#e2e2e2"></div>
<div class="a" style="left:101.5px;top:341.500px;width:1px;height:84px;background:rgba(215,215,215,.85)"></div>
<div class="a" style="left:171.5px;top:341.500px;width:1px;height:84px;background:rgba(215,215,215,.85)"></div>
<div class="a" style="left:227.5px;top:341.500px;width:1px;height:84px;background:rgba(215,215,215,.85)"></div>
<div class="a" style="left:281.5px;top:341.500px;width:1px;height:84px;background:rgba(215,215,215,.85)"></div>
<div class="a" style="left:372.0px;top:341.500px;width:1px;height:84px;background:rgba(215,215,215,.85)"></div>
<div class="a" style="left:441.0px;top:341.500px;width:1px;height:84px;background:rgba(215,215,215,.85)"></div>
<div class="a" style="left:523.5px;top:341.500px;width:1px;height:84px;background:rgba(215,215,215,.85)"></div>
<div class="a" style="left:590.5px;top:341.500px;width:1px;height:84px;background:rgba(215,215,215,.85)"></div>
<div class="a" style="left:645.0px;top:341.500px;width:1px;height:84px;background:rgba(215,215,215,.85)"></div>
<div class="a" style="left:729.5px;top:341.500px;width:1px;height:84px;background:rgba(215,215,215,.85)"></div>
<div class="a" style="left:804.5px;top:341.500px;width:1px;height:84px;background:rgba(215,215,215,.85)"></div>
<div class="a" style="left:903.5px;top:341.500px;width:1px;height:84px;background:rgba(215,215,215,.85)"></div>
<div class="a" style="left:987.5px;top:341.500px;width:1px;height:84px;background:rgba(215,215,215,.85)"></div>
<div class="a" style="left:1091.5px;top:341.500px;width:1px;height:84px;background:rgba(215,215,215,.85)"></div>
<div class="a" style="left:1174.5px;top:341.500px;width:1px;height:84px;background:rgba(215,215,215,.85)"></div>
<div class="a" style="left:28px;top:324.400px;width:1236px;height:110.600px;border:1px solid #f83c3c;box-shadow:1px 3px 5px rgba(0,0,0,.2)"></div>
<div class="c" style="left:69px;top:312px">5</div>
<div class="a" style="left:28px;top:474px;width:1235px;height:15px;background:#fafafa"></div>
<div class="a" style="left:46px;top:477px;width:1198px;height:9px;border-radius:5px;background:#8b8b8b"></div>
<svg class="a" style="left:32px;top:476px" width="8" height="11" viewBox="0 0 8 11"><path d="M7 1v9L0.800 5.500z" fill="#8b8b8b"/></svg>
<svg class="a" style="left:1251px;top:476px" width="8" height="11" viewBox="0 0 8 11"><path d="M1 1v9l6.200-4.500z" fill="#8b8b8b"/></svg>
<div class="a" style="left:28px;top:489px;width:1235px;height:1px;background:#dedede"></div>
<span class="t" style="left:41.6px;top:499.00px;font-size:9.5px;line-height:13px;color:#333;transform:scaleX(0.9257);transform-origin:0 50%;-webkit-text-stroke:0.2px #333;">Show</span>
<div class="a" style="left:66.300px;top:499.300px;width:34.300px;height:11.500px;border:1px solid #d6d6d6;border-radius:2px;background:#fff"></div>
<span class="t" style="left:70.2px;top:499.00px;font-size:9.5px;line-height:13px;color:#222;transform:scaleX(0.8954);transform-origin:0 50%;">100</span>
<svg class="a" style="left:86.800px;top:501.500px" width="11" height="8" viewBox="0 0 11 8"><path d="M1.300 1.500L5.500 5.700l4.200-4.200" fill="none" stroke="#222" stroke-width="1.900"/></svg>
<span class="t" style="left:104px;top:499.00px;font-size:9.5px;line-height:13px;color:#333;letter-spacing:-0.019px;-webkit-text-stroke:0.2px #333;">entries</span>
<span class="t" style="left:165px;top:500.00px;font-size:9.5px;line-height:13px;color:#333;transform:scaleX(0.9244);transform-origin:0 50%;">Showing 1 to 5 of 5 entries</span>
<span class="t" style="left:1060.8px;top:497.00px;font-size:13.5px;line-height:19px;color:#5a5a5a;">«</span>
<span class="t" style="left:1072px;top:501.00px;font-size:9.5px;line-height:13px;color:#5a5a5a;transform:scaleX(0.9367);transform-origin:0 50%;">First</span>
<span class="t" style="left:1104.3px;top:496.00px;font-size:14px;line-height:20px;color:#5a5a5a;">‹</span>
<span class="t" style="left:1116.5px;top:501.00px;font-size:9.5px;line-height:13px;color:#5a5a5a;transform:scaleX(0.9278);transform-origin:0 50%;">Previous</span>
<div class="a" style="left:1158px;top:500.300px;width:15px;height:14.700px;border-radius:2px;background:#707070"></div>
<span class="t" style="left:1163.2px;top:501.00px;font-size:9.5px;line-height:13px;color:#fffbe8;">1</span>
<span class="t" style="left:1180px;top:501.00px;font-size:9.5px;line-height:13px;color:#5a5a5a;transform:scaleX(0.9362);transform-origin:0 50%;">Next</span>
<span class="t" style="left:1205px;top:496.00px;font-size:14px;line-height:20px;color:#5a5a5a;">›</span>
<span class="t" style="left:1225.7px;top:501.00px;font-size:9.5px;line-height:13px;color:#5a5a5a;transform:scaleX(0.9461);transform-origin:0 50%;">Last</span>
<span class="t" style="left:1246.5px;top:497.00px;font-size:13.5px;line-height:19px;color:#5a5a5a;">»</span>
</div>
</body></html>
